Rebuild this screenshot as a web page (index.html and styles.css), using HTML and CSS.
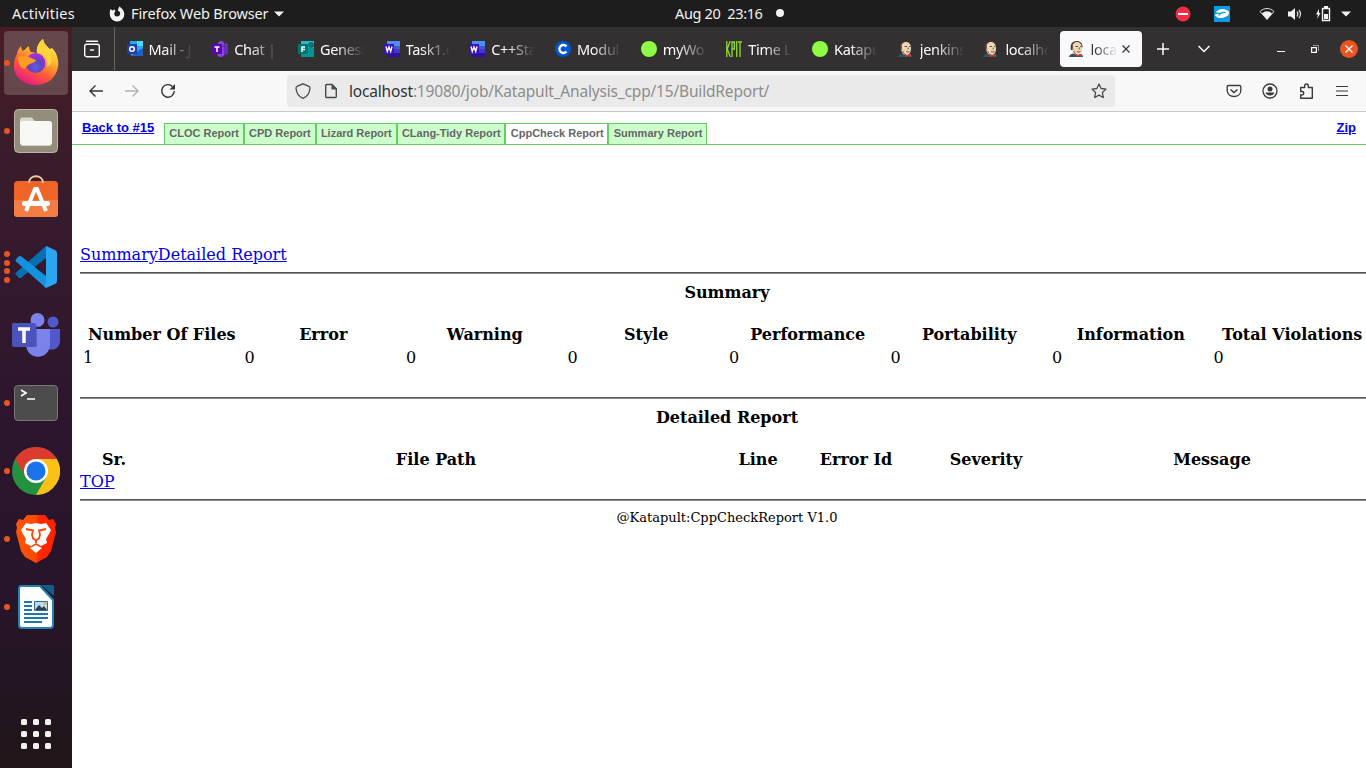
FILE: index.html
```html
<!DOCTYPE html>
<html lang="en">
<head>
<meta charset="utf-8">
<title>CppCheck Report</title>
<link rel="stylesheet" href="styles.css">
</head>
<body>
<svg class="defs" width="0" height="0">
  <defs>
    <linearGradient id="ff" x1=".8" y1="0" x2=".25" y2="1"><stop offset="0" stop-color="#fff44f"/><stop offset=".35" stop-color="#ffb62b"/><stop offset=".65" stop-color="#ff5a36"/><stop offset="1" stop-color="#e5158c"/></linearGradient>
    <radialGradient id="globe" cx=".5" cy=".7" r=".7"><stop offset="0" stop-color="#5c5fe0"/><stop offset=".5" stop-color="#6440c4"/><stop offset="1" stop-color="#b031e0"/></radialGradient>
    <linearGradient id="brave"><stop offset="0" stop-color="#ff5500"/><stop offset=".5" stop-color="#ff4a00"/><stop offset=".55" stop-color="#ff2a00"/><stop offset="1" stop-color="#ff2000"/></linearGradient>
    <symbol id="word" viewBox="0 0 16 16"><path fill="#4f8df0" d="M3 0h13v5H3z"/><path fill="#3c5bd8" d="M3 5h13v3H3z"/><path fill="#4a35c8" d="M3 8h13v4H3z"/><path fill="#2f0fa0" d="M3 12h13v4H3z"/><path fill="#3a10b8" d="M0 3h10v10H0z"/><path fill="none" stroke="#fff" stroke-width="1.4" d="M2 5.500l1.300 5L5 6l1.700 4.500L8 5.500"/></symbol>
    <symbol id="jenkins" viewBox="0 0 16 16"><path fill="#335061" d="M0 16c0-2 2-3 4-3.500l5 .5c4 0 5 1 5 3z"/><path fill="#4a3a33" d="M2 9C.5 3 3.500 0 8 0c3.500 0 5.500 2.500 5.500 6L12 10z"/><path fill="#efd6b4" d="M3.300 8C3 3 5 1 8.200 1c3.200 0 4.800 3 4.800 6.500 0 4-1.800 6.500-4.800 6.500C5 14 3.300 11 3.300 8z"/><path stroke="#5a4438" stroke-width=".9" fill="none" d="M2.500 4C4 5 3 7 4 8.500M6.500 5.500h2.500M11 5.500h1.500M10.200 6.500v2M8 10.500c1.500.8 2.500.5 3.500 0M5 10c0 2 1 3 2.500 3.500"/><path fill="#d33833" d="M7 13l2.500 1 3.500-1.200v3L9.500 15 7 16z"/></symbol>
    <symbol id="kpit" viewBox="0 0 16 16"><path fill="none" stroke="#8edb2c" stroke-width="1.300" d="M.8 0v16M4.200 0L1.300 8l3 8M6 16V1h2.300v7H6M10.700 0v16M12 1h4M14 1v15"/></symbol>
  </defs>
</svg>
<div class="desktop">
  <header class="topbar">
    <span class="activities">Activities</span>
    <svg class="fox-mono" width="16" height="16" viewBox="0 0 16 16"><path fill="#f2f2f2" d="M1.500 3L3.500 4.500 5.500 3.500l1 1.500C4.500 7 5 10.500 8 10.500c3 0 4-3 2.500-5L9 5C9 3 9.800 1.500 10.500.5 12 2 15.300 4 15.300 8.200A7.200 7.200 0 0 1 .8 8.500C.6 6 1 4.500 1.500 3z"/></svg>
    <span class="appname">Firefox Web Browser</span>
    <svg class="app-caret" width="10" height="6"><path fill="#f2f2f2" d="M0 .5h10L5 5.500z"/></svg>
    <span class="clock">Aug 20&nbsp; 23:16</span>
    <i class="notify"></i>
    <div class="status">
      <svg width="16" height="16" viewBox="0 0 16 16"><circle cx="8" cy="8" r="7.500" fill="#f22c42"/><path stroke="#fff" stroke-width="2" d="M3 8h10"/></svg>
      <svg width="16" height="16" viewBox="0 0 16 16"><path fill="#0a9cde" d="M0 0h16v16H0z"/><path fill="#fff" d="M2 6c2-2.500 6-3.500 9-2.500 3 .8 4.500 2 4 4-.4 2-3 4-7 4.500-2.500.3-4.500 0-5-1L1 9.500c-.5-1 1.500-2 3-2z"/><path stroke="#0a9cde" stroke-width="1.200" fill="none" d="M4.500 9.500c2-3 4-3.500 7-3M2 7.500c2-.5 3-.5 4 0"/></svg>
      <svg width="16" height="16" viewBox="0 0 16 16"><path fill="#f2f2f2" d="M3 7.400a7 7 0 0 1 10 0L8 13.500z"/><path fill="none" stroke="#e0e0e0" d="M1 5.500c4-4 10-4 14 0L8 13.500z"/></svg>
      <svg width="16" height="16" viewBox="0 0 16 16"><path fill="#f2f2f2" d="M1 5.500h3L8 2v12l-4-3.500H1z"/><path fill="none" stroke="#d0d0d0" stroke-width="1.300" d="M10 5.500q1.800 2.500 0 5M12 4q3 4 0 8"/></svg>
      <svg width="16" height="16" viewBox="0 0 16 16"><path fill="#f2f2f2" d="M9 0h4v2H9zM9 8h4v5H9zM4 3L1 8.500h2L2 13l3.500-6H4z"/><path fill="none" stroke="#f2f2f2" stroke-width="1.400" d="M7.500 2.500h7v12h-7z"/></svg>
      <svg width="10" height="6"><path fill="#f2f2f2" d="M0 .5h10L5 5.500z"/></svg>
    </div>
  </header>
  <div class="workspace">
    <nav class="dock">
      <div class="slot active"><i class="dot"></i>
        <svg width="48" height="50" viewBox="0 0 48 50"><path fill="url(#ff)" d="M5 16c0-3 2-6 4-8 0 2 1 4 2 5 2-1 4-4 6-5 0 3 1 5 2 6 3 0 5 1 6 2C24 9 27 4 31 1c1 5 4 7 7 10l2-1c5 5 7 12 6 19-2 11-11 18-22 18C11 47 1 38 2 27c0-4 1-8 3-11z"/><circle cx="23.500" cy="25" r="10" fill="url(#globe)"/><path fill="#ff9c22" d="M6 19c6-2 10-1 13 1l5 2c0 2-4 3-6 4-3 1-4 3-5 5-4 0-7-5-7-12z"/><path fill="#ffd23e" d="M31 1c-4 3-7 8-6 14 8 0 12 7 10 14 6-3 6-9 3-15-3-5-6-7-7-13z"/></svg></div>
      <div class="slot"><i class="dot"></i>
        <svg width="48" height="48" viewBox="0 0 48 48"><rect x="2.500" y="2.500" width="43" height="43" rx="4" fill="#938d7b" stroke="#bbb5a6"/><path fill="#ded8ca" d="M8 13q0-2.500 2.500-2.500h9l3 3V19H8z"/><rect x="8" y="14" width="32" height="24" rx="2.500" fill="#f8f8f6"/><path stroke="#d5d1c5" d="M9 38.500h30"/></svg></div>
      <div class="slot">
        <svg width="48" height="48" viewBox="0 0 48 48"><rect x="2" y="6" width="44" height="36" rx="4" fill="#ef6427"/><path fill="#f47c45" d="M2 25h44v14a3 3 0 0 1-3 3H5a3 3 0 0 1-3-3z"/><path fill="none" stroke="#efcfa4" stroke-width="2" d="M17 8c0-9 14-9 14 0"/><path fill="none" stroke="#fff" stroke-width="4" d="M14 36l9-22h2l9 22"/><rect x="10" y="26" width="28" height="5" rx="2.500" fill="#fff"/></svg></div>
      <div class="slot"><i class="dot d1"></i><i class="dot d2"></i><i class="dot d3"></i><i class="dot d4"></i>
        <svg width="48" height="48" viewBox="0 0 48 48"><path fill="#0870b0" d="M3.500 31l3 3.500q1.500 1 3 0L34 15V3L3.500 30z"/><path fill="#1592dc" d="M3.500 17l3-3.500q1.500-1 3 0L34 33v12L3.500 18z"/><path fill="#29a5f2" d="M34 3l9 4q2 1 2 3v28q0 2-2 3l-9 4-2-2 2-3z"/></svg></div>
      <div class="slot">
        <svg width="48" height="48" viewBox="0 0 48 48"><circle cx="25.500" cy="9" r="7" fill="#7b83eb"/><circle cx="41" cy="11" r="5.500" fill="#5059c9"/><path fill="#5059c9" d="M35 18h13v12c0 10-13 11-14 5z"/><path fill="#7b83eb" d="M14 18h24v15c0 17-24 17-24 0z"/><path fill="#3d469f" opacity=".5" d="M14 14h11v22H14z"/><rect y="12" width="24" height="24" rx="2" fill="#4b53bc"/><path fill="none" stroke="#fff" stroke-width="3.500" d="M6 18h12M12 18v14"/></svg></div>
      <div class="slot"><i class="dot"></i>
        <svg width="48" height="48" viewBox="0 0 48 48"><rect x="2.500" y="6.500" width="43" height="35" rx="3.500" fill="#4c4c4c" stroke="#767676"/><path fill="none" stroke="#fff" stroke-width="1.700" d="M9 11l5 3-5 3M15 20h8"/></svg></div>
      <div class="slot"><i class="dot"></i>
        <svg width="48" height="48" viewBox="0 0 48 48"><circle cx="24" cy="24" r="24" fill="#24913f"/><path fill="#db3a2e" d="M3.200 12A24 24 0 0 1 44.800 12H24L13.600 30z"/><path fill="#fbc116" d="M44.800 12A24 24 0 0 1 24 48l10.400-18L24 12z"/><circle cx="24" cy="24" r="12" fill="#fff"/><circle cx="24" cy="24" r="9.500" fill="#1a73e8"/></svg></div>
      <div class="slot"><i class="dot"></i>
        <svg width="48" height="48" viewBox="0 0 48 48"><path fill="url(#brave)" d="M15 0h18l4 5 4-1 3 5-1 4 1 4-5 19-4 6-11 6-11-6-4-6L4 17l1-4-1-4 3-5 4 1z"/><path fill="#fff" d="M14 8l5 1 5-1 5 1 5-1 5 7-2 4-3 5 1 4-6 3-5-3-5 3-6-3 1-4-3-5-2-4z"/><path fill="none" stroke="#ff4500" stroke-width="1.800" d="M14 14l7 1.500-1 4 1 4 3 2 3-2 1-4-1-4 7-1.500M24 25v3"/><path fill="#fff" d="M18 33l6-3 6 3-6 5z"/></svg></div>
      <div class="slot"><i class="dot"></i>
        <svg width="48" height="48" viewBox="0 0 48 48"><path fill="#fff" stroke="#2183b5" stroke-width="2" d="M9 3h19l13 14v25q0 3-3 3H10q-3 0-3-3V6q0-3 2-3z"/><path fill="#155d8d" d="M29 2h11q2 0 2 2v9z"/><path stroke="#1d77aa" stroke-width="2" d="M12 19h8M12 23h8M12 27h8M12 31h24M12 35h24M12 39h18"/><path fill="#b7dcf5" stroke="#2272a0" d="M22.500 18.500h13v9h-13z"/><path fill="#3c3c3c" d="M23 27l4-5 3 3 2-2 3 4z"/><circle cx="33" cy="20.500" r="1.500" fill="#f0b52c"/></svg></div>
      <div class="apps"><i></i><i></i><i></i><i></i><i></i><i></i><i></i><i></i><i></i></div>
    </nav>
    <main class="window">
      <div class="tabstrip">
        <div class="view"><svg width="18" height="18" viewBox="0 0 18 18"><path fill="none" stroke="#fbfbfe" stroke-width="1.400" stroke-linecap="round" d="M3.500 1.200h11M7.500 10h3"/><rect x="1.700" y="4.200" width="14.600" height="12.500" rx="2" fill="none" stroke="#fbfbfe" stroke-width="1.400"/></svg></div>
        <div class="tabs">
          <div class="tab"><svg width="16" height="16"><path fill="#28a8ea" d="M3 0h13v9H3z"/><path fill="#50d9ff" d="M10 0h6v5h-6z"/><path fill="#3b8ee8" d="M4 8h12v7H4z"/><path fill="#1f5fc8" d="M16 7v8H4z"/><path fill="#1b3fae" d="M0 3h10v10H0z"/><circle cx="5" cy="8" r="2.300" fill="none" stroke="#fff" stroke-width="1.500"/></svg><span>Mail - J</span></div>
          <div class="tab"><svg width="16" height="16"><circle cx="9" cy="3" r="3" fill="#8b45dd"/><circle cx="14" cy="4" r="2" fill="#7130c8"/><path fill="#8b45dd" d="M5 6h8v6q-1 4-4 4-4 0-4-4z"/><path fill="#6a29c0" d="M12 6h4v6q-1 2-4 2z"/><path fill="#5b05b5" d="M0 3h10v10H0z"/><path stroke="#fff" stroke-width="1.500" d="M2.500 6h5M5 6v5"/></svg><span>Chat | </span></div>
          <div class="tab"><svg width="16" height="16"><path fill="#19bfc1" d="M3 0h13v7H3z"/><path fill="#069394" d="M3 7h13v9H3z"/><circle cx="13" cy="4" r="3" fill="#067275"/><path fill="#037376" d="M0 3h10v10H0z"/><path stroke="#fff" stroke-width="1.500" fill="none" d="M7 6H4v5M4 8.500h3"/></svg><span>Genesi</span></div>
          <div class="tab"><svg width="16" height="16"><use href="#word"/></svg><span>Task1.d</span></div>
          <div class="tab"><svg width="16" height="16"><use href="#word"/></svg><span>C++Sta</span></div>
          <div class="tab"><svg width="16" height="16"><circle cx="8" cy="8" r="8" fill="#0056d2"/><path fill="none" stroke="#fff" stroke-width="2.300" d="M11.500 5.500a4 4 0 1 0 0 5"/></svg><span>Modul</span></div>
          <div class="tab"><svg width="16" height="16"><circle cx="8" cy="8" r="8" fill="#8efc46"/></svg><span>myWo</span></div>
          <div class="tab"><svg width="16" height="16"><use href="#kpit"/></svg><span>Time L</span></div>
          <div class="tab"><svg width="16" height="16"><circle cx="8" cy="8" r="8" fill="#8efc46"/></svg><span>Katapu</span></div>
          <div class="tab"><svg width="16" height="16"><use href="#jenkins"/></svg><span>jenkins</span></div>
          <div class="tab"><svg width="16" height="16"><use href="#jenkins"/></svg><span>localho</span></div>
          <div class="tab current"><svg width="16" height="16"><use href="#jenkins"/></svg><span>local</span><svg class="close" width="8" height="8"><path stroke="#333" stroke-width="1.200" d="M.5.5l7 7M7.500.5l-7 7"/></svg></div>
        </div>
        <div class="tab-tools">
          <svg width="12" height="12"><path stroke="#fbfbfe" stroke-width="1.500" d="M6 0v12M0 6h12"/></svg>
          <svg width="12" height="8"><path fill="none" stroke="#fbfbfe" stroke-width="1.500" d="M.5 1L6 6.500 11.500 1"/></svg>
          <svg class="min" width="8" height="8"><path stroke="#fff" d="M0 6.500h8"/></svg>
          <svg width="8" height="8"><path fill="none" stroke="#fff" stroke-width="1.200" d="M.6 2.600h4.800v4.800H.6z"/><path fill="none" stroke="#999" d="M2 .5h5.500V6"/></svg>
          <svg width="18" height="18"><circle cx="9" cy="9" r="9" fill="#e95420"/><path stroke="#fff" stroke-width="1.300" d="M5.500 5.500l7 7M12.500 5.500l-7 7"/></svg>
        </div>
      </div>
      <div class="toolbar">
        <div class="navs">
          <svg width="16" height="16"><path fill="none" stroke="#333" stroke-width="1.400" d="M15 8H2M7.500 2.500L2 8l5.500 5.500"/></svg>
          <svg width="16" height="16"><path fill="none" stroke="#b1b1b1" stroke-width="1.400" d="M1 8h13M8.500 2.500L14 8l-5.500 5.500"/></svg>
          <svg width="16" height="16"><path fill="none" stroke="#333" stroke-width="1.400" d="M12.500 3.500A6.300 6.300 0 1 0 14.300 8"/><path fill="#333" d="M15 1v5.500H9.500z"/></svg>
        </div>
        <div class="urlbar">
          <svg width="16" height="16"><path fill="none" stroke="#4a4a4a" stroke-width="1.300" d="M8 .8l6 2.500c.8.300 1 1 1 2C14.500 10 12 14 8 15.300 4 14 1.500 10 1 5.300c0-1 .2-1.700 1-2z"/></svg>
          <svg class="page" width="14" height="16"><path fill="none" stroke="#4a4a4a" stroke-width="1.400" d="M1.700 2.500q0-1 1-1H8l4.300 4.300v7.700q0 1-1 1H2.700q-1 0-1-1z"/><path fill="#4a4a4a" d="M7.500 1v5.500H13z"/></svg>
          <span class="url"><b>localhost</b>:19080/job/Katapult_Analysis_cpp/15/BuildReport/</span>
          <svg class="star" width="16" height="16"><path fill="none" stroke="#4a4a4a" stroke-width="1.300" stroke-linejoin="round" d="M8 1l2.100 4.500 4.900.6-3.600 3.400.9 5L8 12.100l-4.300 2.400.9-5L1 6.100l4.900-.6z"/></svg>
        </div>
        <div class="tools">
          <svg width="16" height="16"><path fill="none" stroke="#3a3a3a" stroke-width="1.300" d="M2.500 2.500h11q1.300 0 1.300 1.300V7.500c0 8-13.600 8-13.600 0V3.800q0-1.300 1.300-1.300z"/><path fill="none" stroke="#3a3a3a" stroke-width="1.500" d="M4.500 6.500L8 9.500l3.500-3"/></svg>
          <svg width="16" height="16"><circle cx="8" cy="8" r="7" fill="none" stroke="#3a3a3a" stroke-width="1.300"/><circle cx="8" cy="6" r="2.500" fill="#3a3a3a"/><path fill="#3a3a3a" d="M3.500 9.500h9c-1 4-8 4-9 0z"/></svg>
          <svg width="16" height="16"><path fill="none" stroke="#3a3a3a" stroke-width="1.400" stroke-linejoin="round" d="M2.700 8V4.500h4V3c0-2.600 3.600-2.600 3.600 0v1.500h4v10.700H2.700V12H4c2.400 0 2.400-3.500 0-3.500H2.700z"/></svg>
          <svg width="16" height="16"><path stroke="#3a3a3a" stroke-width="1.200" d="M2 3.500h12M2 8h12M2 12.500h12"/></svg>
        </div>
      </div>
      <div class="page-view">
        <div class="report-nav">
          <a class="back" href="#">Back to #15</a>
          <ul><li>CLOC Report</li><li>CPD Report</li><li>Lizard Report</li><li>CLang-Tidy Report</li><li class="selected">CppCheck Report</li><li>Summary Report</li></ul>
          <a class="zip" href="#">Zip</a>
        </div>
        <div class="report">
          <div class="links"><a href="#">Summary</a><a href="#">Detailed Report</a></div>
          <hr>
          <h4>Summary</h4>
          <table class="summary">
            <tr><th>Number Of Files</th><th>Error</th><th>Warning</th><th>Style</th><th>Performance</th><th>Portability</th><th>Information</th><th>Total Violations</th></tr>
            <tr><td>1</td><td>0</td><td>0</td><td>0</td><td>0</td><td>0</td><td>0</td><td>0</td></tr>
          </table>
          <hr>
          <h4>Detailed Report</h4>
          <table class="detail">
            <colgroup><col class="w5"><col class="w45"><col class="w5"><col class="w10"><col class="w10"><col class="w25"></colgroup>
            <tr><th>Sr.</th><th>File Path</th><th>Line</th><th>Error Id</th><th>Severity</th><th>Message</th></tr>
          </table>
          <a class="top" href="#">TOP</a>
          <hr>
          <p class="credit">@Katapult:CppCheckReport V1.0</p>
        </div>
      </div>
    </main>
  </div>
</div>
</body>
</html>
```
FILE: styles.css
```css
* { box-sizing: border-box; }
body { margin: 0; overflow: hidden; }
svg { display: block; flex: none; }
.defs { position: absolute; }
.desktop { width: 1366px; height: 768px; display: flex; flex-direction: column; overflow: hidden; }

.topbar { position: relative; height: 27px; flex: none; display: flex; align-items: center; padding-left: 12px; background: #1d1d1d; color: #f2f2f2; font: 14.500px/27px "Noto Sans", sans-serif; white-space: nowrap; }
.activities { width: 63px; letter-spacing: .25px; }
.fox-mono { margin-left: 34px; }
.appname { width: 138px; margin-left: 6px; letter-spacing: -.15px; }
.app-caret { margin-left: 5px; }
.clock { position: absolute; left: 675px; letter-spacing: -.35px; }
.notify { position: absolute; left: 776px; top: 9px; width: 8px; height: 8px; border-radius: 50%; background: #f2f2f2; }
.status { margin-left: auto; padding-right: 15px; display: flex; align-items: center; }
.status svg:nth-child(2) { margin-left: 23px; }
.status svg:nth-child(3) { margin-left: 29px; }
.status svg:nth-child(4) { margin-left: 12px; }
.status svg:nth-child(5) { margin-left: 12px; }
.status svg:nth-child(6) { margin-left: 10px; }

.workspace { flex: 1; display: flex; min-height: 0; }
.dock { width: 72px; flex: none; padding: 4px; display: flex; flex-direction: column; gap: 4px; background: linear-gradient(#471d24 0, #3c1c2a 110px, #351a2e 220px, #2c162d 400px, #28152a 560px, #21151d 700px, #211519 741px); }
.slot { position: relative; height: 64px; flex: none; display: flex; align-items: center; justify-content: center; border-radius: 4px; }
.slot.active { background: #65474c; }
.dot { position: absolute; left: 0; top: 29px; width: 6px; height: 6px; border-radius: 50%; background: #e95420; }
.d1 { top: 16px; } .d2 { top: 25px; } .d3 { top: 33px; } .d4 { top: 42px; }
.apps { margin: auto auto 15px; display: grid; grid-template-columns: repeat(3, 6px); gap: 6px; }
.apps i { height: 6px; border-radius: 1.5px; background: #f2f1ee; }

.window { flex: 1; min-width: 0; display: flex; flex-direction: column; background: #fff; }
.tabstrip { height: 44px; flex: none; display: flex; background: #333031; }
.view { width: 43px; padding: 13px 0 0 11px; border-right: 1px solid #666364; }
.tabs { width: 1029px; padding-left: 2.5px; display: flex; align-items: center; }
.tab { width: 85.7px; flex: none; height: 36px; padding-left: 9px; display: flex; align-items: center; color: #fbfbfe; font: 14.500px/20px "Noto Sans", sans-serif; }
.tab span { width: 45px; margin-left: 6px; overflow: hidden; white-space: nowrap; letter-spacing: -.3px; -webkit-mask-image: linear-gradient(90deg, #000 35%, transparent 98%); mask-image: linear-gradient(90deg, #000 35%, transparent 98%); }
.tab.current { width: 82px; padding-left: 8.500px; background: #f9f9fb; border-radius: 4px; color: #333; }
.tab.current span { width: 27px; -webkit-mask-image: linear-gradient(90deg, #000 10%, transparent); mask-image: linear-gradient(90deg, #000 10%, transparent); }
.close { margin-left: 4px; }
.tab-tools { flex: 1; padding: 0 8px 0 13px; display: flex; align-items: center; }
.tab-tools svg + svg { margin-left: 29px; }
.tab-tools .min { margin-left: 67px; }
.tab-tools .min + svg { margin-left: 26px; }
.tab-tools svg:last-child { margin-left: 21px; }

.toolbar { height: 41px; flex: none; display: flex; align-items: center; background: #f8f8f8; border-bottom: 1px solid #c9c9c9; }
.navs { width: 215px; padding-left: 16px; display: flex; gap: 20px; }
.urlbar { width: 828px; height: 32px; padding: 0 8px; display: flex; align-items: center; border-radius: 4px; background: #eaeaea; }
.page { margin-left: 13px; }
.url { width: 430px; margin-left: 11px; color: #8c8c8c; font: 15.500px/22px "Noto Sans", sans-serif; letter-spacing: -.18px; white-space: nowrap; }
.url b { color: #333; font-weight: normal; }
.star { margin-left: auto; }
.tools { margin-left: auto; padding-right: 16px; display: flex; gap: 20px; }

.page-view { flex: 1; min-height: 0; overflow: hidden; }
.report-nav { height: 33px; padding: 0 10px; display: flex; align-items: flex-start; border-bottom: 1px solid #66cc66; font: bold 13px/16px "Liberation Sans", sans-serif; }
a { color: #0000ee; text-decoration: underline; }
.back { width: 82px; padding-top: 8px; }
.zip { margin-left: auto; padding-top: 8px; }
.report-nav ul { margin: 11px 0 0; padding: 0; display: flex; list-style: none; font-size: 11px; }
.report-nav li { height: 21px; padding: 1px 3.800px 0 4.300px; border: 1px solid #66cc66; border-bottom: 0; background: #ccffcc; color: #666; }
.report-nav .selected { background: #fff; }

.report { width: 1302px; padding: 100px 0 0 8px; font: 16px/19px "DejaVu Serif", serif; color: #000; }
.links { height: 27px; }
hr { height: 2px; margin: 0; border: 0; background: #555; border-bottom: 1px solid #888; }
h4 { margin: 9px 0 20px; font-size: 16px; line-height: 19px; text-align: center; }
table { width: 1294px; table-layout: fixed; border-spacing: 2px; }
th, td { height: 21px; padding: 1px; white-space: nowrap; }
.summary { margin-bottom: 27px; }
.w5 { width: 64px; } .w45 { width: 576px; } .w10 { width: 128px; } .w25 { width: 320px; }
.top { display: block; width: 36px; height: 27px; }
.credit { margin: 9px 0 0; font-size: 13px; line-height: 16px; text-align: center; }
```
